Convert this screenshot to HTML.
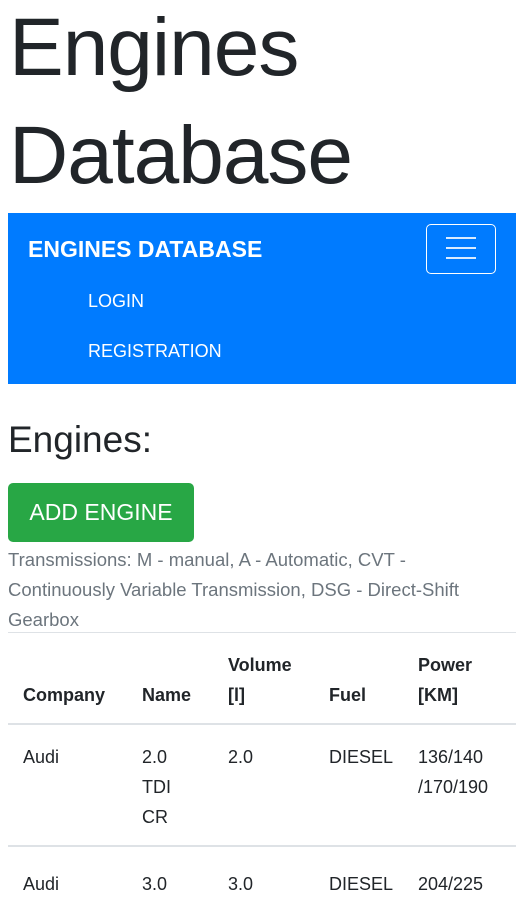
<!DOCTYPE html>
<html><head><meta charset="utf-8"><style>
*{box-sizing:border-box;margin:0;padding:0}
body{width:522px;height:873px;overflow:hidden;background:#fff;font-family:"Liberation Sans",sans-serif;color:#212529;position:relative}
.a{position:absolute;white-space:nowrap}
h1{position:absolute;left:9px;top:-6px;font-weight:300;font-size:82px;line-height:108px;letter-spacing:-1px}
.nav{position:absolute;left:8px;top:213px;width:508px;height:171px;background:#007bff}
.tog{position:absolute;left:418px;top:11px;width:70px;height:50px;border:1.5px solid #fff;border-radius:5px}
.tog i{position:absolute;left:19px;width:30px;height:2px;background:rgba(255,255,255,.85)}
.btn{position:absolute;left:8px;top:483px;width:186px;height:59px;background:#28a745;border-radius:5px;color:#fff;font-size:23px;line-height:59px;text-align:center}
.g{position:absolute;left:8px;top:545px;width:500px;color:#6c757d;font-size:18.5px;line-height:30px}
.hr{position:absolute;left:8px;width:508px;background:#dee2e6}
.t{font-size:18px;line-height:30px}
.b{font-weight:bold}
</style></head><body>
<h1>Engines<br>Database</h1>
<div class="nav">
<div class="a" style="left:20px;top:23px;color:#fff;font-weight:bold;font-size:23px">ENGINES DATABASE</div>
<div class="tog"><i style="top:12px"></i><i style="top:22px"></i><i style="top:32px"></i></div>
<div class="a" style="left:80px;top:78px;color:#fff;font-size:18px">LOGIN</div>
<div class="a" style="left:80px;top:128px;color:#fff;font-size:18px">REGISTRATION</div>
</div>
<div class="a" style="left:8px;top:419px;font-size:37px">Engines:</div>
<div class="btn">ADD ENGINE</div>
<div class="g">Transmissions: M - manual, A - Automatic, CVT - Continuously Variable Transmission, DSG - Direct-Shift Gearbox</div>
<div class="hr" style="top:632px;height:1px"></div>
<div class="a t b" style="left:23px;top:680px">Company</div>
<div class="a t b" style="left:142px;top:680px">Name</div>
<div class="a t b" style="left:228px;top:650px">Volume<br>[l]</div>
<div class="a t b" style="left:329px;top:680px">Fuel</div>
<div class="a t b" style="left:418px;top:650px">Power<br>[KM]</div>
<div class="hr" style="top:723px;height:2px"></div>
<div class="a t" style="left:23px;top:742px">Audi</div>
<div class="a t" style="left:142px;top:742px">2.0<br>TDI<br>CR</div>
<div class="a t" style="left:228px;top:742px">2.0</div>
<div class="a t" style="left:329px;top:742px">DIESEL</div>
<div class="a t" style="left:418px;top:742px">136/140<br>/170/190</div>
<div class="hr" style="top:845px;height:2px"></div>
<div class="a t" style="left:23px;top:869px">Audi</div>
<div class="a t" style="left:142px;top:869px">3.0</div>
<div class="a t" style="left:228px;top:869px">3.0</div>
<div class="a t" style="left:329px;top:869px">DIESEL</div>
<div class="a t" style="left:418px;top:869px">204/225</div>
</body></html>
